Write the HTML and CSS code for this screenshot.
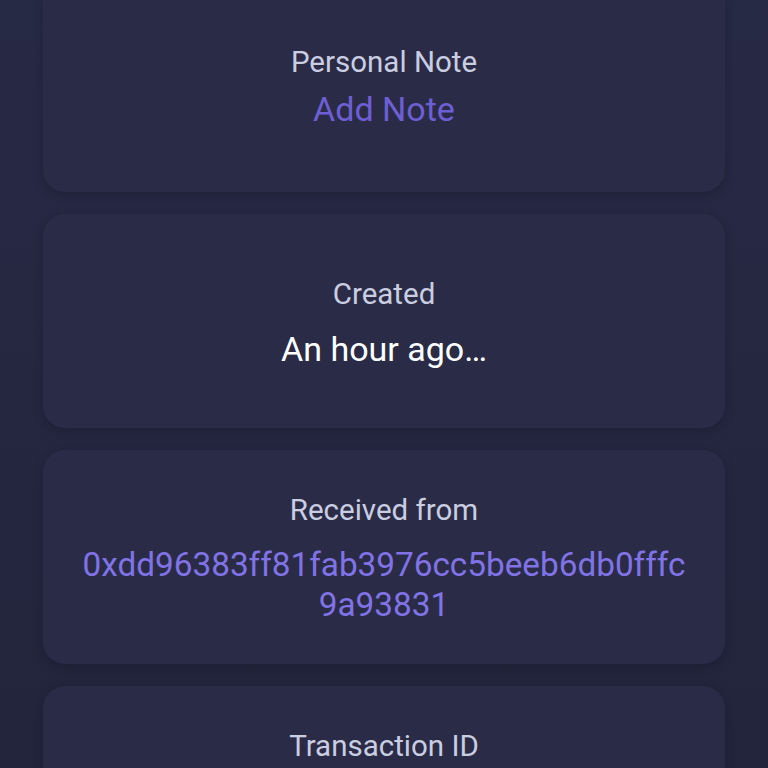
FILE: index.html
```html
<!DOCTYPE html>
<html lang="en">
<head>
<meta charset="utf-8">
<title>Transaction details</title>
<link rel="stylesheet" href="styles.css">
</head>
<body>
<main class="list">
  <section class="card card-note">
    <div class="label">Personal Note</div>
    <div class="value value-link">Add Note</div>
  </section>
  <section class="card">
    <div class="label">Created</div>
    <div class="value">An hour ago…</div>
  </section>
  <section class="card">
    <div class="label">Received from</div>
    <div class="value value-addr">0xdd96383ff81fab3976cc5beeb6db0fffc9a93831</div>
  </section>
  <section class="card">
    <div class="label">Transaction ID</div>
    <div class="value value-addr">0x4f2a9c81d07be35a6e19c0f7d2b84a3e5c61f09db27e8a4c53f1b60e9d7a2c48</div>
  </section>
</main>
</body>
</html>
```
FILE: styles.css
```css
html, body {
  margin: 0;
  padding: 0;
}
body {
  background: linear-gradient(180deg, #272a45 0%, #24263f 60%, #22243b 100%);
  min-height: 768px;
  overflow: hidden;
  font-family: Roboto, "Noto Sans", "Liberation Sans", sans-serif;
}
.list {
  display: flex;
  flex-direction: column;
  gap: 22px;
  margin: -22px 43px 0 43px;
}
.card {
  box-sizing: border-box;
  min-height: 214px;
  padding: 42px 38px 38px 38px;
  background: #2a2c47;
  border-radius: 22px;
  box-shadow: 0 3px 10px rgba(10, 11, 24, 0.25);
  display: flex;
  flex-direction: column;
  justify-content: center;
  align-items: center;
  text-align: center;
}
.label {
  font-size: 29.5px;
  line-height: 34px;
  color: #cbcde0;
}
.value {
  margin-top: 18px;
  font-size: 34px;
  line-height: 40px;
  color: #ffffff;
}
.card-note .value {
  margin-top: 10px;
}
.value-link {
  color: #6d5fd3;
}
.value-addr {
  font-size: 33.3px;
  color: #8173e6;
  word-break: break-all;
}
```
